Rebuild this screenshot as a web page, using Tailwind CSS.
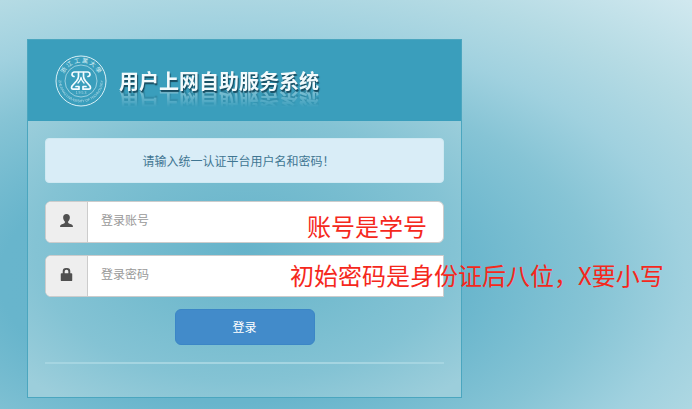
<!DOCTYPE html>
<html lang="zh-CN">
<head>
    <meta charset="UTF-8">
    <meta name="viewport" content="width=device-width, initial-scale=1.0">
    <title>用户上网自助服务系统</title>
    <script src="https://cdn.jsdelivr.net/npm/@tailwindcss/browser@4"></script>
</head>
<body class="min-h-screen overflow-x-hidden px-[27px] pt-[39px] pb-[10px] font-['Noto_Sans_CJK_SC',sans-serif] text-xs bg-[radial-gradient(66%_61%_at_33%_68%,#66b4cc_0%,#68b5cc_50%,#86c4d5_80%,#a0d1df_100%,#b5dbe4_122%,#d0e8ef_150%)]">
    <!-- Login panel -->
    <main class="relative max-w-[435px] border border-[#4ba6bf]">
        <header class="flex items-center gap-3 bg-[#3a9ebc] px-[27px] pt-[15px] pb-[14px]">
            <svg class="size-[52px] shrink-0" viewBox="0 0 52 52" fill="none" stroke="#d9f0f6" aria-hidden="true">
                <defs>
                    <path id="ring-top" d="M7.500 26a18.500 18.500 0 0 1 37 0"/>
                    <path id="ring-bottom" d="M3.800 25a22.200 22.200 0 0 0 44.400 0"/>
                </defs>
                <circle cx="26" cy="26" r="25" stroke-width="1"/>
                <circle cx="26" cy="26" r="16" stroke-width=".6"/>
                <g fill="#d9f0f6" stroke="none" text-anchor="middle">
                    <text font-size="6"><textPath href="#ring-top" startOffset="50%">浙 江 工 業 大 學</textPath></text>
                    <text font-size="3.4" opacity=".8" font-family="Liberation Sans"><textPath href="#ring-bottom" startOffset="50%">ZHEJIANG UNIVERSITY OF TECHNOLOGY</textPath></text>
                    <text x="26" y="39" font-size="3.5" opacity=".7" font-family="Liberation Sans">1 9 5 3</text>
                </g>
                <g stroke="#f4fcff" stroke-width="1.7" stroke-linejoin="round" stroke-linecap="round">
                    <path d="M19 21.500q-2-.3-2-2.200t2-2.300h14q2 .4 2 2.300t-2 2.200"/>
                    <path d="M23.500 17.500v4q0 2-2 4.500l-4.500 5q-1.500 3 1.500 3.200h5.500v-2.700h-3"/>
                    <path d="M28.500 17.500v4q0 2 2 4.500l4.500 5q1.500 3-1.500 3.200h-5.500v-2.700h3"/>
                    <path d="M26 22.500q-.5 3-3 5.500M26 22.500q.5 3 3 5.500" stroke-width="1.300"/>
                </g>
            </svg>
            <h1 class="text-[20px] leading-6 font-bold text-[#f3fafc] [text-shadow:1px_2px_1px_#174c60] [-webkit-box-reflect:below_-5px_linear-gradient(transparent_20%,rgb(255_255_255/0.45))]">用户上网自助服务系统</h1>
        </header>

        <form class="bg-[radial-gradient(69%_69%_at_50%_46%,#66b3ca_0%,#76bccf_40%,#84c3d4_70%,#9ccedb_100%)] px-[17px] pt-[17px] pb-[33px]">
            <div class="mb-[18px] flex h-[45px] items-center justify-center rounded border border-[#cfe9f2] bg-[#d9edf7] pr-3 text-[#3f7692]">请输入统一认证平台用户名和密码！</div>

            <div class="mb-3 flex h-[42px] overflow-hidden rounded-md border border-[#ccc] bg-white">
                <label for="username" class="flex w-[42px] items-center justify-center border-r border-[#ccc] bg-[#eee] pb-1" aria-label="登录账号">
                    <svg class="size-[13px]" viewBox="0 0 12 12" fill="#505050"><path d="M6 0C4 0 2.900 1.200 2.900 3c0 1.800.7 3.200 1.600 4v.8c0 .4-.3.700-.8.9L1.200 9.700C.5 10 .1 10.500.1 11.200v.8h11.800v-.8c0-.7-.4-1.200-1.100-1.500L8.300 8.700c-.5-.2-.8-.5-.8-.9V7c.9-.8 1.600-2.200 1.600-4C9.100 1.200 8 0 6 0z"/></svg>
                </label>
                <input id="username" type="text" placeholder="登录账号" class="min-w-0 flex-1 px-[13px] pb-1 outline-none placeholder:text-[#999]">
            </div>

            <div class="mb-3 flex h-[42px] overflow-hidden rounded-l-md border border-[#ccc] bg-white">
                <label for="password" class="flex w-[42px] items-center justify-center border-r border-[#ccc] bg-[#eee] pb-1" aria-label="登录密码">
                    <svg class="size-[13px]" viewBox="0 0 12 12" fill="#505050"><path d="M2.500 4.800V3q0-3 3-3h1q3 0 3 3v1.800h1q.8 0 .8.8v5.600q0 .8-.8.8h-9q-.8 0-.8-.8V5.600q0-.8.8-.8zm1.800 0h3.400V3.200q0-1.500-1.500-1.500h-.4q-1.500 0-1.500 1.500z"/></svg>
                </label>
                <input id="password" type="password" placeholder="登录密码" class="min-w-0 flex-1 px-[13px] pb-1 outline-none placeholder:text-[#999]">
            </div>

            <button type="submit" class="mx-auto block h-9 w-[140px] rounded-md border border-[#3b86c6] bg-[#428bca] text-white">登录</button>
            <hr class="mt-[17px] border-t-2 border-[#a5d5e1]">
        </form>

        <!-- Notes laid over the fields -->
        <p class="absolute top-[170px] left-[279px] text-2xl whitespace-nowrap text-[#f5281c]">账号是学号</p>
        <p class="absolute top-[219px] left-[262px] text-2xl whitespace-nowrap text-[#f5281c]">初始密码是身份证后八位，X要小写</p>
    </main>
</body>
</html>
